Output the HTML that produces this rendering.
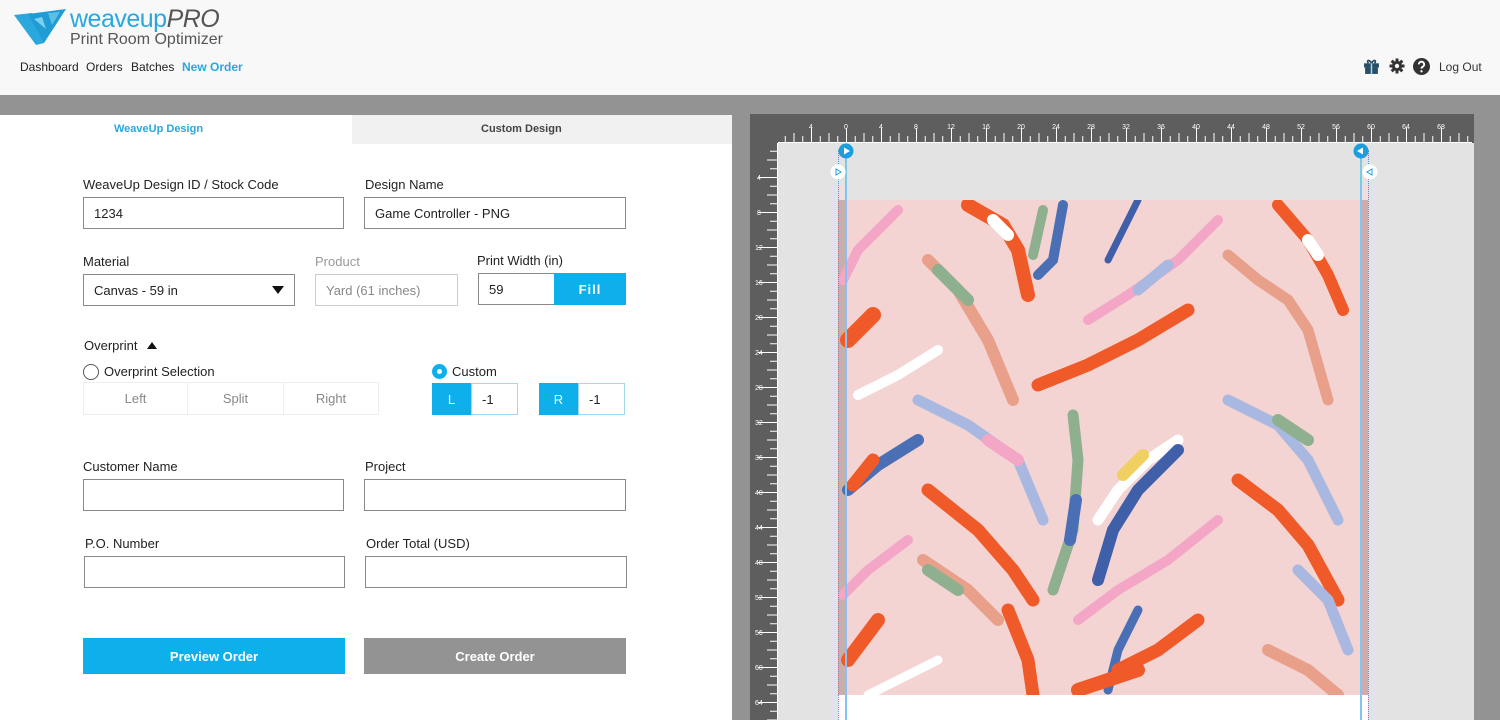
<!DOCTYPE html>
<html><head><meta charset="utf-8"><style>
*{margin:0;padding:0;box-sizing:border-box}
body{width:1500px;height:720px;overflow:hidden;background:#939393;font-family:"Liberation Sans",sans-serif;position:relative;color:#222}
.a{position:absolute}
.hdr{left:0;top:0;width:1500px;height:95px;background:#f8f8f8}
.nav{top:60px;font-size:12px;color:#222}
.lbl{font-size:13px;color:#222}
.inp{border:1px solid #888;background:#fff;font-size:13px;padding-left:10px;display:flex;align-items:center;height:32px}
.btn{color:#fff;font-weight:bold;font-size:13px;display:flex;align-items:center;justify-content:center}
.seg{border:1px solid #eee;color:#888;font-size:13px;display:flex;align-items:center;justify-content:center;height:33px;top:382px}
</style></head><body>
<div class="a hdr"></div>
<svg class="a" style="left:14px;top:9px" width="56" height="36" viewBox="0 0 56 36"><polygon points="0,6 18,4 30,34 22,36" fill="#2aa7dc"/><polygon points="14,5 52,0 30,34" fill="#1f9bd6"/><polygon points="20,10 28,8 32,20" fill="#7fd0ef"/><polygon points="34,4 46,3 38,16" fill="#5bbfe8"/></svg>
<div class="a" style="left:70px;top:5px;font-size:25px;color:#29a8df;letter-spacing:-0.5px">weaveup<span style="color:#555;font-style:italic">PRO</span></div>
<div class="a" style="left:70px;top:31px;font-size:16px;color:#555">Print Room Optimizer</div>
<div class="a nav" style="left:20px">Dashboard</div>
<div class="a nav" style="left:86px">Orders</div>
<div class="a nav" style="left:131px">Batches</div>
<div class="a nav" style="left:182px;color:#29a8df;font-weight:bold">New Order</div>
<svg class="a" style="left:1363px;top:58px" width="17" height="17" viewBox="0 0 16 16"><rect x="1" y="5" width="14" height="4" fill="#2a4d66"/><rect x="2" y="9" width="12" height="6" fill="#2a4d66"/><path d="M8 5C6 1 3 2 5 5M8 5C10 1 13 2 11 5" stroke="#2a4d66" stroke-width="1.6" fill="none"/><rect x="7.3" y="5" width="1.4" height="10" fill="#9fd8f0"/></svg>
<svg class="a" style="left:1389px;top:58px" width="16" height="16" viewBox="0 0 16 16"><g fill="#333"><circle cx="8" cy="8" r="5"/><rect x="6.5" y="0.5" width="3" height="15"/><rect x="0.5" y="6.5" width="15" height="3"/><rect x="6.5" y="0.5" width="3" height="15" transform="rotate(45 8 8)"/><rect x="6.5" y="0.5" width="3" height="15" transform="rotate(-45 8 8)"/></g><circle cx="8" cy="8" r="2.2" fill="#f8f8f8"/></svg>
<svg class="a" style="left:1413px;top:58px" width="17" height="17" viewBox="0 0 16 16"><circle cx="8" cy="8" r="8" fill="#333"/><path d="M5.5 6a2.5 2.5 0 1 1 3.5 2.3c-.8.4-1 .8-1 1.7" stroke="#fff" stroke-width="1.8" fill="none"/><circle cx="8" cy="12.5" r="1.1" fill="#fff"/></svg>
<div class="a" style="left:1439px;top:60px;font-size:12px;color:#333">Log Out</div>

<!-- left panel -->
<div class="a" style="left:0;top:115px;width:732px;height:605px;background:#fff"></div>
<div class="a" style="left:352px;top:115px;width:380px;height:29px;background:#f2f1f1"></div>
<div class="a" style="left:114px;top:123px;font-size:11px;font-weight:bold;color:#29a8df">WeaveUp Design</div>
<div class="a" style="left:481px;top:123px;font-size:11px;font-weight:bold;color:#444">Custom Design</div>

<div class="a lbl" style="left:83px;top:177px">WeaveUp Design ID / Stock Code</div>
<div class="a lbl" style="left:365px;top:177px">Design Name</div>
<div class="a inp" style="left:83px;top:197px;width:261px">1234</div>
<div class="a inp" style="left:364px;top:197px;width:262px">Game Controller - PNG</div>

<div class="a lbl" style="left:83px;top:254px">Material</div>
<div class="a lbl" style="left:315px;top:254px;color:#999">Product</div>
<div class="a lbl" style="left:477px;top:253px">Print Width (in)</div>
<div class="a inp" style="left:83px;top:274px;width:212px">Canvas - 59 in</div>
<div class="a" style="left:272px;top:286px;width:0;height:0;border-left:6px solid transparent;border-right:6px solid transparent;border-top:8px solid #111"></div>
<div class="a inp" style="left:315px;top:274px;width:143px;border-color:#ccc;color:#888">Yard (61 inches)</div>
<div class="a inp" style="left:478px;top:273px;width:77px">59</div>
<div class="a btn" style="left:554px;top:273px;width:72px;height:32px;background:#0db0ea;letter-spacing:1px">Fill</div>

<div class="a lbl" style="left:84px;top:338px">Overprint</div>
<div class="a" style="left:147px;top:342px;border-left:5px solid transparent;border-right:5px solid transparent;border-bottom:7px solid #111"></div>
<div class="a" style="left:83px;top:364px;width:16px;height:16px;border:1px solid #555;border-radius:50%"></div>
<div class="a lbl" style="left:104px;top:364px">Overprint Selection</div>
<div class="a seg" style="left:83px;width:105px">Left</div>
<div class="a seg" style="left:187px;width:97px">Split</div>
<div class="a seg" style="left:283px;width:96px">Right</div>
<div class="a" style="left:432px;top:364px;width:15px;height:15px;border-radius:50%;background:#0db0ea"><div class="a" style="left:5px;top:5px;width:5px;height:5px;border-radius:50%;background:#fff"></div></div>
<div class="a lbl" style="left:452px;top:364px">Custom</div>
<div class="a btn" style="left:432px;top:383px;width:39px;height:32px;background:#0db0ea;font-weight:normal">L</div>
<div class="a inp" style="left:471px;top:383px;width:47px;border-color:#9fd8f0">-1</div>
<div class="a btn" style="left:539px;top:383px;width:39px;height:32px;background:#0db0ea;font-weight:normal">R</div>
<div class="a inp" style="left:578px;top:383px;width:47px;border-color:#9fd8f0">-1</div>

<div class="a lbl" style="left:83px;top:459px">Customer Name</div>
<div class="a lbl" style="left:365px;top:459px">Project</div>
<div class="a inp" style="left:83px;top:479px;width:261px"></div>
<div class="a inp" style="left:364px;top:479px;width:262px"></div>
<div class="a lbl" style="left:85px;top:536px">P.O. Number</div>
<div class="a lbl" style="left:366px;top:536px">Order Total (USD)</div>
<div class="a inp" style="left:84px;top:556px;width:261px"></div>
<div class="a inp" style="left:365px;top:556px;width:262px"></div>
<div class="a btn" style="left:83px;top:638px;width:262px;height:36px;background:#0db0ea">Preview Order</div>
<div class="a btn" style="left:364px;top:638px;width:262px;height:36px;background:#939393">Create Order</div>

<!-- right canvas -->
<div class="a" style="left:750px;top:114px;width:724px;height:606px;background:#5e5e5e"></div>
<div class="a" style="left:778px;top:143px;width:696px;height:577px;background:#e3e3e3"></div>
<svg class="a" style="left:750px;top:114px" width="724" height="606">
<defs>
<pattern id="ht" width="35" height="30" patternUnits="userSpaceOnUse" x="96"><g stroke="#fff" stroke-width="1"><line x1="0.5" y1="14" x2="0.5" y2="30"/><line x1="9.25" y1="22" x2="9.25" y2="30"/><line x1="18" y1="19" x2="18" y2="30"/><line x1="26.75" y1="22" x2="26.75" y2="30"/></g></pattern>
<pattern id="vt" width="30" height="35" patternUnits="userSpaceOnUse" y="28"><g stroke="#fff" stroke-width="1"><line y1="0.5" x1="8" y2="0.5" x2="28"/><line y1="9.25" x1="20" y2="9.25" x2="28"/><line y1="18" x1="17" y2="18" x2="28"/><line y1="26.75" x1="20" y2="26.75" x2="28"/></g></pattern>
</defs>
<rect x="28" y="0" width="694" height="29" fill="url(#ht)"/>
<line x1="28" y1="28.5" x2="722" y2="28.5" stroke="#fff"/>
<rect x="0" y="29" width="28" height="577" fill="url(#vt)"/>
<line x1="27.5" y1="29" x2="27.5" y2="606" stroke="#fff"/>
<g fill="#fff" font-size="7" font-family="Liberation Sans" text-anchor="middle">
<text x="61" y="15">4</text><text x="96" y="15">0</text><text x="131" y="15">4</text><text x="166" y="15">8</text><text x="201" y="15">12</text><text x="236" y="15">16</text><text x="271" y="15">20</text><text x="306" y="15">24</text><text x="341" y="15">28</text><text x="376" y="15">32</text><text x="411" y="15">36</text><text x="446" y="15">40</text><text x="481" y="15">44</text><text x="516" y="15">48</text><text x="551" y="15">52</text><text x="586" y="15">56</text><text x="621" y="15">60</text><text x="656" y="15">64</text><text x="691" y="15">68</text>
</g>
<g fill="#fff" font-size="7" font-family="Liberation Sans">
<text x="7" y="66">4</text><text x="7" y="101">8</text><text x="5" y="136">12</text><text x="5" y="171">16</text><text x="5" y="206">20</text><text x="5" y="241">24</text><text x="5" y="276">28</text><text x="5" y="311">32</text><text x="5" y="346">36</text><text x="5" y="381">40</text><text x="5" y="416">44</text><text x="5" y="451">48</text><text x="5" y="486">52</text><text x="5" y="521">56</text><text x="5" y="556">60</text><text x="5" y="591">64</text>
</g>
</svg>
<div class="a" style="left:838px;top:695px;width:530px;height:25px;background:#fff"></div>
<svg class="a" style="left:838px;top:200px" width="530" height="495" viewBox="0 0 530 495">
<rect width="530" height="495" fill="#f4d3d3"/>
<rect width="8" height="495" fill="#c9aeb0"/><rect x="522" width="8" height="495" fill="#c9aeb0"/>
<g stroke-linecap="round" fill="none">
<g id="sw">
<path d="M130 5 L165 25 L180 50 L190 95" stroke="#f05a28" stroke-width="14"/>
<path d="M155 20 L170 35" stroke="#fff" stroke-width="12"/>
<path d="M225 5 L215 60 L200 75" stroke="#4a6fb5" stroke-width="10"/>
<path d="M205 10 L195 55" stroke="#8fb08f" stroke-width="10"/>
<path d="M300 0 L270 60" stroke="#3f5fa8" stroke-width="7"/>
<path d="M380 20 L340 60 L290 95 L250 120" stroke="#f4a6c6" stroke-width="10"/>
<path d="M330 65 L300 90" stroke="#a8b8e0" stroke-width="11"/>
<path d="M440 5 L470 40 L490 75 L505 110" stroke="#f05a28" stroke-width="12"/>
<path d="M470 40 L480 55" stroke="#fff" stroke-width="12"/>
<path d="M390 55 L420 80 L450 100 L470 130 L490 200" stroke="#e8a08a" stroke-width="11"/>
<path d="M60 10 L20 50 L5 80" stroke="#f4a6c6" stroke-width="10"/>
<path d="M90 60 L120 90 L150 140 L175 200" stroke="#e8a08a" stroke-width="12"/>
<path d="M100 70 L130 100" stroke="#8fb08f" stroke-width="12"/>
<path d="M35 115 L10 140" stroke="#f05a28" stroke-width="16"/>
<path d="M350 110 L300 140 L250 165 L200 185" stroke="#f05a28" stroke-width="13"/>
<path d="M100 150 L60 175 L20 195" stroke="#fff" stroke-width="10"/>
<path d="M80 200 L130 225 L180 260 L205 320" stroke="#a8b8e0" stroke-width="11"/>
<path d="M150 240 L180 260" stroke="#f4a6c6" stroke-width="12"/>
<path d="M390 200 L440 225 L470 260 L500 320" stroke="#a8b8e0" stroke-width="11"/>
<path d="M440 220 L470 240" stroke="#8fb08f" stroke-width="12"/>
<path d="M340 240 L310 260 L280 290 L260 320" stroke="#fff" stroke-width="11"/>
<path d="M285 275 L305 255" stroke="#f0d060" stroke-width="12"/>
<path d="M235 215 L240 260 L235 330 L215 390" stroke="#8fb08f" stroke-width="11"/>
<path d="M238 300 L232 340" stroke="#4a6fb5" stroke-width="12"/>
<path d="M80 240 L40 265 L10 290" stroke="#4a6fb5" stroke-width="12"/>
<path d="M35 260 L15 285" stroke="#f05a28" stroke-width="13"/>
<path d="M340 250 L300 290 L275 330 L260 380" stroke="#3f5fa8" stroke-width="12"/>
<path d="M90 290 L140 330 L175 370 L195 400" stroke="#f05a28" stroke-width="13"/>
<path d="M400 280 L440 310 L470 345 L500 400" stroke="#f05a28" stroke-width="13"/>
<path d="M70 340 L30 370 L5 395" stroke="#f4a6c6" stroke-width="10"/>
<path d="M380 320 L330 360 L280 390 L240 420" stroke="#f4a6c6" stroke-width="10"/>
<path d="M85 360 L130 390 L160 420" stroke="#e8a08a" stroke-width="12"/>
<path d="M90 370 L120 390" stroke="#8fb08f" stroke-width="12"/>
<path d="M170 410 L190 460 L195 495" stroke="#f05a28" stroke-width="13"/>
<path d="M300 410 L280 450 L270 490" stroke="#4a6fb5" stroke-width="9"/>
<path d="M360 420 L320 450 L280 470" stroke="#f05a28" stroke-width="13"/>
<path d="M460 370 L490 400 L510 450" stroke="#a8b8e0" stroke-width="11"/>
<path d="M40 420 L10 460" stroke="#f05a28" stroke-width="14"/>
<path d="M100 460 L60 480 L30 495" stroke="#fff" stroke-width="9"/>
<path d="M300 470 L240 490" stroke="#f05a28" stroke-width="14"/>
<path d="M430 450 L470 470 L500 495" stroke="#e8a08a" stroke-width="12"/>
</g>
</g>
</svg>
<div class="a" style="left:845px;top:150px;width:2px;height:570px;background:#7ec8e6"></div>
<div class="a" style="left:838px;top:150px;width:0;height:570px;border-left:1px dotted #29a8df"></div>
<div class="a" style="left:1360px;top:150px;width:2px;height:570px;background:#7ec8e6"></div>
<div class="a" style="left:1368px;top:150px;width:0;height:570px;border-left:1px dotted #29a8df"></div>
<svg class="a" style="left:838px;top:143px" width="16" height="16"><circle cx="8" cy="8" r="7.5" fill="#1a9fdc"/><polygon points="6,4.5 12,8 6,11.5" fill="#fff"/></svg>
<svg class="a" style="left:1353px;top:143px" width="16" height="16"><circle cx="8" cy="8" r="7.5" fill="#1a9fdc"/><polygon points="10,4.5 4,8 10,11.5" fill="#fff"/></svg>
<svg class="a" style="left:830px;top:164px" width="16" height="16"><circle cx="8" cy="8" r="7.5" fill="#fff"/><polygon points="6,5 11,8 6,11" fill="none" stroke="#1a9fdc"/></svg>
<svg class="a" style="left:1362px;top:164px" width="16" height="16"><circle cx="8" cy="8" r="7.5" fill="#fff"/><polygon points="10,5 5,8 10,11" fill="none" stroke="#1a9fdc"/></svg>
</body></html>
